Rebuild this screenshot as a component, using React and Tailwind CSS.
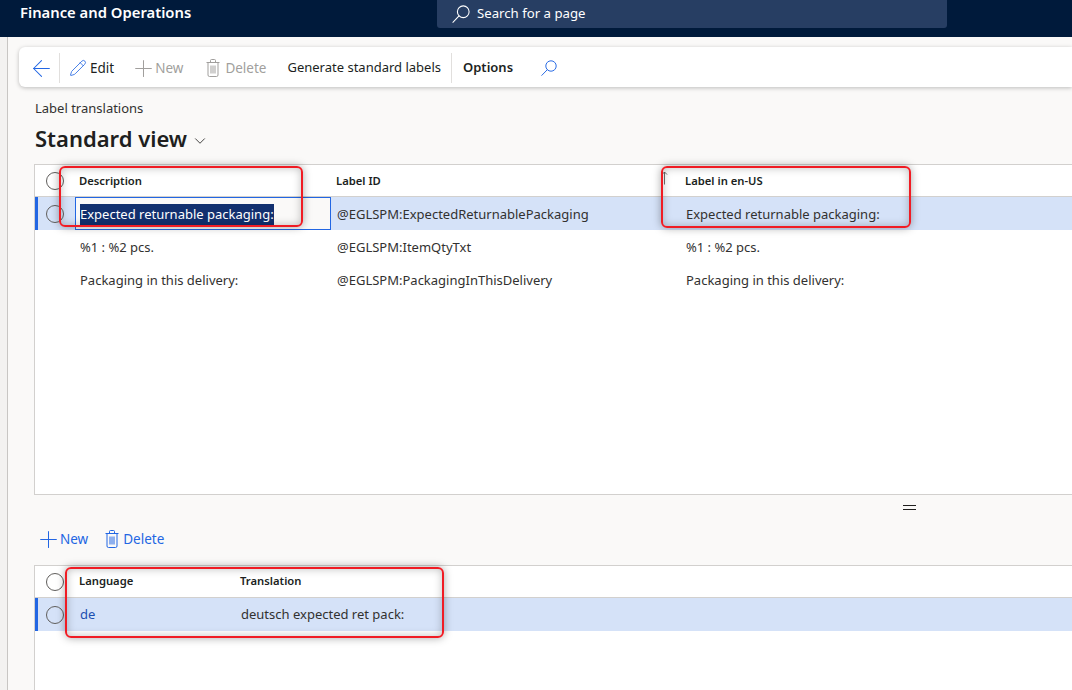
import React from 'react';
import { ArrowLeft, Pencil, Plus, ChevronDown } from 'lucide-react';

const font = { fontFamily: '"Noto Sans", "Liberation Sans", sans-serif' };

const topRows = [
  { desc: '%1 : %2 pcs.', id: '@EGLSPM:ItemQtyTxt', label: '%1 : %2 pcs.' },
  { desc: 'Packaging in this delivery:', id: '@EGLSPM:PackagingInThisDelivery', label: 'Packaging in this delivery:' },
];

function SearchGlyph({ size, className }) {
  return (
    <svg width={size} height={size} viewBox="0 0 20 20" fill="none" stroke="currentColor" strokeWidth="1.2" className={className}>
      <circle cx="12.5" cy="7.5" r="6.5" />
      <path d="M7.8 12.2 1 19.2" strokeLinecap="round" />
    </svg>
  );
}

function TrashGlyph({ className }) {
  return (
    <svg width="14" height="18" viewBox="0 0 14 18" fill="none" stroke="currentColor" strokeWidth="1" className={className}>
      <path d="M0.5 3.5h13M4.5 3.5V1.5a1 1 0 0 1 1-1h3a1 1 0 0 1 1 1v2" />
      <path d="M2 3.5v12.5a1.5 1.5 0 0 0 1.5 1.5h7a1.5 1.5 0 0 0 1.5-1.5V3.5" />
      <path d="M5 6.5v8M7 6.5v8M9 6.5v8" />
    </svg>
  );
}

function RowCircle() {
  return <div className="w-[18px] h-[18px] rounded-full border border-[#605e5c] bg-transparent shrink-0" />;
}

function RedBox({ className }) {
  return (
    <div className={`absolute border-2 border-[#f01c24] rounded-[6px] shadow-[0_0_8px_rgba(0,0,0,0.35),inset_0_0_8px_rgba(0,0,0,0.25)] pointer-events-none ${className}`} />
  );
}

export default function App() {
  return (
    <div className="relative w-[1072px] h-[690px] overflow-hidden bg-[#faf9f8] flex flex-col" style={font}>
      <header className="h-[37px] bg-[#001a3b] flex shrink-0 text-white">
        <div className="w-[437px] pl-[20px] pt-[2px] text-[14.8px] font-semibold leading-[20px]">Finance and Operations</div>
        <div className="w-[510px] h-[28px] bg-[#273e63] rounded-b-[3px] flex items-center pl-[15px] gap-[7px] text-[13.2px]">
          <SearchGlyph size={18} />
          <span>Search for a page</span>
        </div>
      </header>

      <div className="flex flex-1 min-h-0">
        <div className="w-[8px] bg-[#f3f2f1] border-r border-[#c8c6c4] shrink-0" />
        <main className="flex-1 min-w-0 pt-[10px] pl-[9px]">
          <div className="h-[40px] ml-[2px] bg-white rounded-l-[6px] shadow-[0_1px_4px_rgba(0,0,0,0.25)] flex items-center pl-[9px] pt-[2px] text-[#201f1e]">
            <ArrowLeft size={27} strokeWidth={0.9} className="text-[#2266e3]" />
            <div className="w-px h-[30px] bg-[#e1dfdd] ml-[4px] mr-[9px]" />
            <Pencil size={18} strokeWidth={1.1} className="text-[#2266e3]" />
            <span className="ml-[3px] text-[13.5px]">Edit</span>
            <Plus size={27} strokeWidth={0.9} className="ml-[16px] text-[#a19f9d]" />
            <span className="-ml-[2px] text-[13.5px] text-[#a19f9d]">New</span>
            <TrashGlyph className="ml-[23px] text-[#a19f9d]" />
            <span className="ml-[5px] text-[13.5px] text-[#a19f9d]">Delete</span>
            <span className="ml-[21px] text-[13px]">Generate standard labels</span>
            <div className="w-px h-[30px] bg-[#e1dfdd] ml-[10px] mr-[11px]" />
            <span className="text-[13px] font-semibold">Options</span>
            <SearchGlyph size={16} className="ml-[28px] text-[#2266e3]" />
          </div>

          <div className="pl-[18px] pt-[12px] text-[13px] leading-[18px] text-[#323130]">Label translations</div>
          <div className="pl-[18px] pt-[5px] flex items-center text-[#201f1e]">
            <span className="text-[22px] font-semibold leading-[32px]">Standard view</span>
            <ChevronDown size={18} strokeWidth={1.1} className="ml-[4px] mt-[5px]" />
          </div>

          {/* top grid */}
          <div className="ml-[17px] mt-[10px] h-[331px] bg-white border border-r-0 border-[#d2d0ce]">
            <div className="h-[32px] flex items-center border-b border-[#d2d0ce] text-[11.25px] font-semibold text-[#201f1e]">
              <div className="w-[44px] pl-[11px]"><RowCircle /></div>
              <div className="w-[257px] pt-[2px]">Description</div>
              <div className="w-[325px] pt-[2px]">Label ID</div>
              <div className="relative pl-[24px] pt-[2px]">
                <svg width="7" height="14" viewBox="0 0 7 14" fill="none" stroke="#605e5c" strokeWidth="0.9" className="absolute left-0 top-0">
                  <path d="M3.5 13.5V1M1 3.5 3.5 1 6 3.5" />
                </svg>
                Label in en-US
              </div>
            </div>
            <div className="h-[33px] flex items-center bg-[#d5e2f8] border-l-[3px] border-[#2266e3] text-[13px] text-[#323130]">
              <div className="w-[37px] pl-[8px]"><RowCircle /></div>
              <div className="w-[256px] h-[33px] border border-[#2266e3] bg-[#faf9f8] flex items-center pl-[4px] pt-[1px] shrink-0">
                <span className="bg-[#12306f] text-white leading-[21px]">Expected returnable packaging:</span>
              </div>
              <div className="w-[355px] pl-[6px] pt-[2px]">@EGLSPM:ExpectedReturnablePackaging</div>
              <div className="pt-[2px]">Expected returnable packaging:</div>
            </div>
            {topRows.map((row) => (
              <div key={row.id} className="h-[33px] flex items-center text-[13px] text-[#323130] pt-[2px]">
                <div className="w-[45px]" />
                <div className="w-[257px]">{row.desc}</div>
                <div className="w-[349px]">{row.id}</div>
                <div>{row.label}</div>
              </div>
            ))}
          </div>

          {/* splitter and lines toolbar */}
          <div className="relative h-[70px] pt-[34px] pl-[18px] text-[13.5px] text-[#2266e3]">
            <div className="absolute left-[886px] top-[10px] w-[13px] h-[5px] border-y border-[#201f1e]" />
            <div className="h-[20px] flex items-center">
              <Plus size={27} strokeWidth={0.9} className="shrink-0" />
              <span className="-ml-[2px]">New</span>
              <TrashGlyph className="ml-[17px]" />
              <span className="ml-[4px]">Delete</span>
            </div>
          </div>

          {/* lower grid */}
          <div className="ml-[17px] h-[130px] bg-white border border-r-0 border-b-0 border-[#d2d0ce]">
            <div className="h-[32px] flex items-center border-b border-[#d2d0ce] text-[11.25px] font-semibold text-[#201f1e]">
              <div className="w-[44px] pl-[11px]"><RowCircle /></div>
              <div className="w-[161px]">Language</div>
              <div>Translation</div>
            </div>
            <div className="h-[33px] flex items-center bg-[#d5e2f8] border-l-[3px] border-[#2266e3] text-[13px] text-[#323130]">
              <div className="w-[42px] pl-[8px]"><RowCircle /></div>
              <div className="w-[161px] text-[#1c4fb0]">de</div>
              <div>deutsch expected ret pack:</div>
            </div>
          </div>
        </main>
      </div>

      <RedBox className="left-[59px] top-[166px] w-[244px] h-[61px]" />
      <RedBox className="left-[661px] top-[166px] w-[250px] h-[62px]" />
      <RedBox className="left-[65px] top-[567px] w-[379px] h-[71px]" />
    </div>
  );
}
